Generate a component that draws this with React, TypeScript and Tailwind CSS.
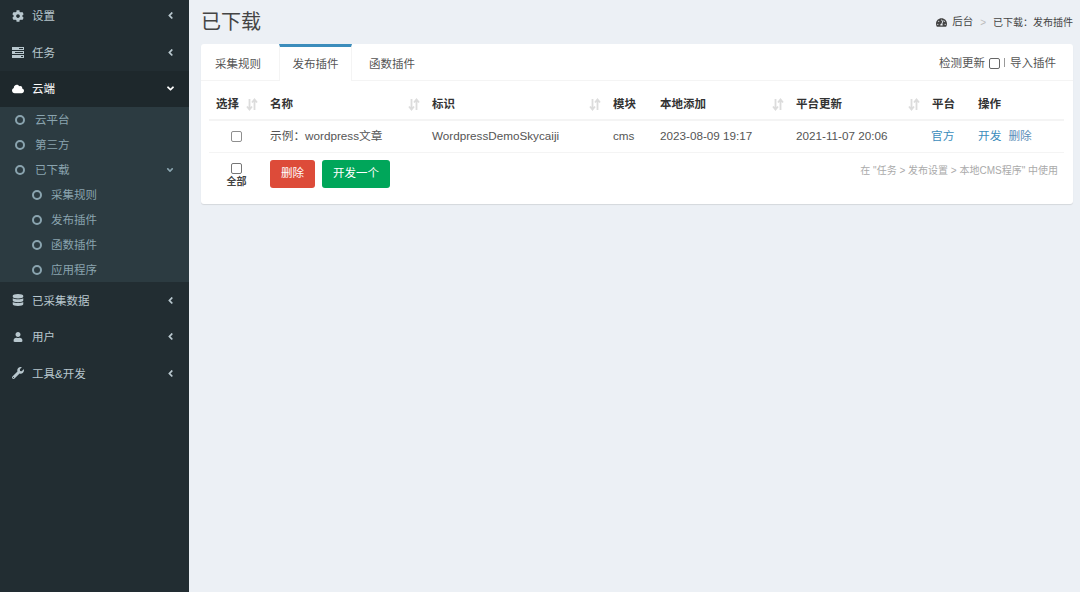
import { FaAngleDown, FaAngleLeft, FaCloud, FaCog, FaDatabase, FaTachometerAlt, FaUser, FaWrench } from "react-icons/fa";
import type { ReactNode } from "react";

const font = { fontFamily: '"Liberation Sans", "Noto Sans CJK SC", sans-serif' };

// stacked-bars icon, the icon set has no close match
function TasksIcon() {
  return (
    <svg width="12" height="11" viewBox="0 0 12 11" fill="currentColor">
      <path d="M0 0h12v3H0zM0 4h12v3H0zM0 8h12v3H0z" />
      <path d="M7 1h4v1H7zM3 5h8v1H3zM9 9h2v1H9z" fill="#222d32" />
    </svg>
  );
}

function SortIcon() {
  return (
    <svg width="12" height="13" viewBox="0 0 12 12" fill="none" stroke="#dcdcdc" strokeWidth="1.8">
      <path d="M3.5 0.5v10M1 8l2.5 3L6 8" />
      <path d="M8.5 11.5v-10M6 4l2.5-3L11 4" />
    </svg>
  );
}

function NavItem({ icon, label, active, open }: { icon: ReactNode; label: string; active?: boolean; open?: boolean }) {
  return (
    <div className={`flex h-[36.5px] items-center pl-3 pr-[13px] text-[11.5px] ${active ? "bg-[#1e282c] text-white" : "text-[#b8c7ce]"}`}>
      <span className="flex w-[12px] justify-center text-[12px]">{icon}</span>
      <span className="ml-2 flex-1 pt-[2px]">{label}</span>
      {open ? <FaAngleDown className="text-[11px]" /> : <FaAngleLeft className="text-[11px]" />}
    </div>
  );
}

function SubItem({ label, deep, open }: { label: string; deep?: boolean; open?: boolean }) {
  return (
    <div className={`flex h-[25px] items-center pr-[14px] text-[11.5px] text-[#8aa4af] ${deep ? "pl-[32px]" : "pl-[15px]"}`}>
      <span className="h-[10px] w-[10px] rounded-full border-2 border-[#8aa4af]" />
      <span className={`flex-1 pt-[2px] ${deep ? "ml-[9px]" : "ml-[10px]"}`}>{label}</span>
      {open && <FaAngleDown className="text-[10px]" />}
    </div>
  );
}

function Check({ dark }: { dark?: boolean }) {
  return <span className={`inline-block h-[11px] w-[11px] rounded-[2px] border bg-white align-middle ${dark ? "border-[#767676]" : "border-[#8f8f8f]"}`} />;
}

function Th({ label, sort }: { label: string; sort?: boolean }) {
  return (
    <th className="pl-[7px] pr-[5px] pt-[2px] text-left text-[11.5px] font-bold">
      <div className="flex items-center justify-between">
        <span>{label}</span>
        {sort && <SortIcon />}
      </div>
    </th>
  );
}

export default function App() {
  return (
    <div className="flex h-[592px] w-[1080px] overflow-hidden bg-[#ecf0f5] text-[#333]" style={font}>
      <aside className="w-[189px] shrink-0 bg-[#222d32]">
        <div className="-mt-[2.5px]">
          <NavItem icon={<FaCog />} label="设置" />
          <NavItem icon={<TasksIcon />} label="任务" />
          <NavItem icon={<FaCloud />} label="云端" active open />
          <div className="bg-[#2c3b41]">
            <SubItem label="云平台" />
            <SubItem label="第三方" />
            <SubItem label="已下载" open />
            <SubItem label="采集规则" deep />
            <SubItem label="发布插件" deep />
            <SubItem label="函数插件" deep />
            <SubItem label="应用程序" deep />
          </div>
          <NavItem icon={<FaDatabase />} label="已采集数据" />
          <NavItem icon={<FaUser className="text-[10px]" />} label="用户" />
          <NavItem icon={<FaWrench />} label="工具&开发" />
        </div>
      </aside>

      <main className="flex-1 pl-3 pr-[7px]">
        <div className="flex h-[44px] items-center justify-between">
          <h1 className="text-[20px] leading-none text-[#444]">已下载</h1>
          <div className="flex items-center text-[10px] text-[#444]">
            <FaTachometerAlt className="text-[11px]" />
            <span className="ml-[5px] text-[10.5px]">后台</span>
            <span className="mx-[7px] text-[#bbb]">&gt;</span>
            <span>已下载：发布插件</span>
          </div>
        </div>

        <section className="h-[160px] rounded-[3px] bg-white shadow-[0_1px_1px_rgba(0,0,0,0.1)]">
          <div className="flex h-[37px] items-stretch border-b border-[#f4f4f4] text-[11.5px] text-[#555]">
            <div className="flex w-[78px] items-center pl-[14px] pt-[5px]">采集规则</div>
            <div className="-mb-px flex w-[73px] items-center justify-center border-x border-t-[3px] border-x-[#f4f4f4] border-t-[#3c8dbc] bg-white pt-px">发布插件</div>
            <div className="flex w-[77px] items-center pl-[17px] pt-[5px]">函数插件</div>
            <div className="ml-auto flex items-center pr-[17px] pt-[3px]">
              <span>检测更新</span>
              <span className="ml-[4px] inline-block h-[11px] w-[11px] rounded-[2px] border border-[#666]" />
              <span className="mb-[3px] ml-[4px] mr-[5px] h-[9px] border-l border-[#999]" />
              <span>导入插件</span>
            </div>
          </div>

          <div className="px-2 pt-[7px]">
            <table className="w-[855px] table-fixed border-collapse text-[11.7px] text-[#555]">
              <colgroup>
                <col className="w-[54px]" />
                <col className="w-[162px]" />
                <col className="w-[181px]" />
                <col className="w-[47px]" />
                <col className="w-[136px]" />
                <col className="w-[136px]" />
                <col className="w-[46px]" />
                <col className="w-[93px]" />
              </colgroup>
              <thead>
                <tr className="h-[32px] border-b-2 border-[#f4f4f4] text-[#333]">
                  <Th label="选择" sort />
                  <Th label="名称" sort />
                  <Th label="标识" sort />
                  <Th label="模块" />
                  <Th label="本地添加" sort />
                  <Th label="平台更新" sort />
                  <Th label="平台" />
                  <Th label="操作" />
                </tr>
              </thead>
              <tbody>
                <tr className="h-[32px] border-b border-[#f4f4f4]">
                  <td className="pb-px text-center"><Check /></td>
                  <td className="px-[7px]">示例：wordpress文章</td>
                  <td className="px-[7px]">WordpressDemoSkycaiji</td>
                  <td className="px-[7px]">cms</td>
                  <td className="px-[7px]">2023-08-09 19:17</td>
                  <td className="px-[7px]">2021-11-07 20:06</td>
                  <td className="pl-[6px] text-[#3c8dbc]">官方</td>
                  <td className="px-[7px] text-[#3c8dbc]">
                    开发<span className="ml-[7px] text-[#5b8db8]">删除</span>
                  </td>
                </tr>
                <tr className="h-[44px]">
                  <td className="pt-[3px] text-center align-top">
                    <div className="flex flex-col items-center pl-px pt-[7px] text-[10px] font-bold text-[#444]">
                      <Check dark />
                      <span className="mt-px leading-[14px]">全部</span>
                    </div>
                  </td>
                  <td colSpan={7} className="pl-[7px] pr-[6px] pt-[7px] align-top">
                    <div className="flex items-center">
                      <button className="h-[28px] w-[45px] rounded-[3px] bg-[#dd4b39] text-[11.5px] text-white">删除</button>
                      <button className="ml-[7px] h-[28px] w-[68px] rounded-[3px] bg-[#00a65a] text-[11.5px] text-white">开发一个</button>
                      <span className="ml-auto pb-[6px] text-[10px] text-[#aaa]">在 "任务 &gt; 发布设置 &gt; 本地CMS程序" 中使用</span>
                    </div>
                  </td>
                </tr>
              </tbody>
            </table>
          </div>
        </section>
      </main>
    </div>
  );
}
